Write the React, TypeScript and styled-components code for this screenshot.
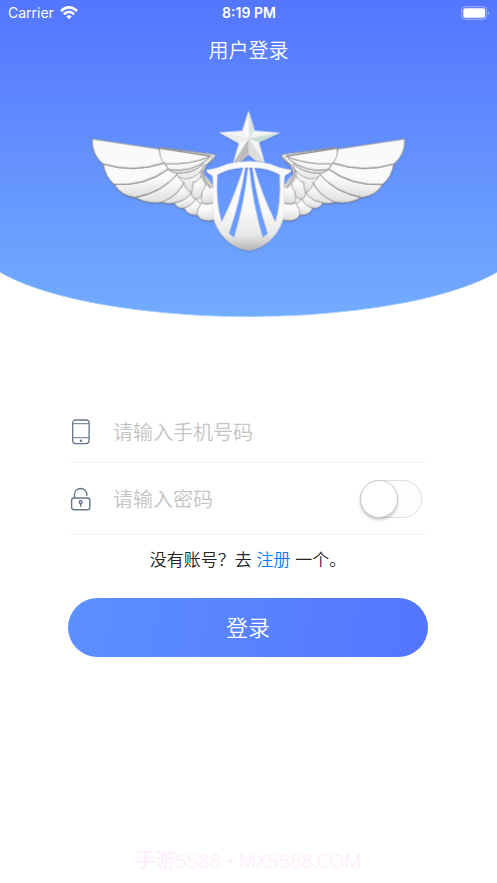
import React, { useState } from "react";
import styled, { createGlobalStyle } from "styled-components";

const GlobalStyle = createGlobalStyle`
  *, *::before, *::after { box-sizing: border-box; }
  body {
    margin: 0;
    background: #fff;
    font-family: "Noto Sans CJK SC", sans-serif;
    font-weight: 350;
  }
`;

const Page = styled.div`
  display: flex;
  flex-direction: column;
  min-height: 100vh;
  overflow: hidden;
`;

const Header = styled.header`
  position: relative;
  display: flex;
  flex-direction: column;
  padding-bottom: 62px;
  color: #fff;

  &::before {
    content: "";
    position: absolute;
    z-index: -1;
    inset: 0 -6%;
    border-bottom: 1px solid #a6cbff;
    border-radius: 0 0 50% 50% / 0 0 81px 81px;
    background: linear-gradient(#5476ff, #72acff);
  }
`;

const StatusBar = styled.div`
  display: grid;
  grid-template-columns: 1fr auto 1fr;
  align-items: center;
  height: 26px;
  padding: 0 7px 0 8px;
  font: 400 14px/26px Inter, sans-serif;
`;

const Carrier = styled.span`
  display: flex;
  align-items: center;
  gap: 6px;
`;

const Clock = styled.time`
  font-weight: 600;
`;

const Battery = styled.svg`
  justify-self: end;
`;

const Title = styled.h1`
  margin: 8px 0 0;
  font-size: 20px;
  font-weight: 350;
  line-height: 32px;
  text-align: center;
`;

const Emblem = styled.svg`
  align-self: center;
  margin-top: 39px;
`;

const Form = styled.form`
  display: flex;
  flex-direction: column;
  margin: 85px 69px 0 68px;
`;

const Field = styled.div<{ $tall?: boolean }>`
  display: flex;
  align-items: center;
  height: ${(p) => (p.$tall ? "72px" : "61px")};
  padding: 0 6px 0 2px;
  border-bottom: 1px solid #f3f3f3;
`;

const FieldLabel = styled.label`
  display: flex;
  width: 43px;
`;

const TextInput = styled.input`
  flex: 1;
  min-width: 0;
  padding: 0;
  border: 0;
  outline: 0;
  background: transparent;
  color: #333;
  font: 350 20px/30px "Noto Sans CJK SC", sans-serif;

  &::placeholder {
    color: #c4c4c4;
    opacity: 1;
  }
`;

const Toggle = styled.input`
  appearance: none;
  flex: none;
  display: flex;
  width: 62px;
  height: 38px;
  margin: 0;
  border: 1px solid #dedede;
  border-radius: 19px;
  background: #fdfdfd;
  cursor: pointer;

  &::before {
    content: "";
    width: 38px;
    height: 38px;
    margin: -1px;
    border: 1px solid #ccc;
    border-radius: 50%;
    background: #fff;
    box-shadow: 0 2px 3px rgba(0, 0, 0, 0.22);
  }

  &:checked {
    justify-content: flex-end;
    background: #5a83ff;
  }
`;

const Hint = styled.p`
  margin: 12px 0 0;
  color: #222;
  font-size: 17px;
  line-height: 24px;
  text-align: center;
`;

const Link = styled.a`
  margin: 0 1px;
  color: #007aff;
  text-decoration: none;
`;

const Submit = styled.button`
  height: 59px;
  margin-top: 27px;
  padding: 0 0 3px;
  border: 0;
  border-radius: 30px;
  background: linear-gradient(100deg, #5c90ff, #5475ff);
  color: #fff;
  font: 350 22px/32px "Noto Sans CJK SC", sans-serif;
  cursor: pointer;
`;

const Watermark = styled.footer`
  margin-top: auto;
  padding: 20px 0 7px;
  color: #ffeafc;
  font: 350 20px/30px "Noto Sans", "Noto Sans CJK SC", sans-serif;
  text-align: center;
`;

const FEATHERS = [
  "M22 102L222 132Q225 160 252 191L232 287Q196 300 152 277L88 238L55 177Q20 150 22 102Z",
  "M250 192L295 230L300 262L268 292Q248 299 232 287L152 277Q110 272 88 238Q60 215 55 177Q145 205 237 174Z",
  "M88 238Q170 245 250 192Q262 205 278 205Q232 270 152 277Q108 272 88 238Z",
  "M152 277Q232 262 278 206Q286 228 298 230Q276 274 232 291Q190 298 152 277Z",
  "M232 291Q284 270 298 230Q302 254 319 262Q306 288 268 293Q248 299 232 291Z",
  "M268 293Q304 288 319 262Q320 278 332 283Q320 304 298 309Q275 312 268 293Z",
  "M298 309Q322 302 331 282Q338 294 350 296L338 329Q308 334 298 309Z",
  "M350 293Q365 302 392 291V343Q350 355 337 330Q334 316 350 293Z",
  "M350 264Q348 246 360 232Q372 246 392 248V290Q355 304 349 285Z",
  "M323 232Q340 228 350 206Q351 222 363 233Q358 254 351 261Q352 276 338 282Q318 284 319 260Z",
  "M278 205Q320 210 350 180L350 208Q341 230 324 232Q325 252 319 262Q300 256 296 231Q280 224 278 205Z",
];

function Wing() {
  return (
    <g stroke="#858585" strokeWidth="2" strokeLinejoin="round">
      <path d="M250 192L350 200L392 248V320L340 320L300 262Z" fill="#f2f2f2" stroke="none" />
      {FEATHERS.map((d) => (
        <path key={d} d={d} fill="url(#feather)" />
      ))}
      <path d="M55 177Q145 205 237 174M88 238Q185 244 250 192M152 277Q232 262 278 206" fill="none" strokeWidth="3" />
      <path
        d="M225 127L378 147L392 150Q388 165 370 176Q345 200 365 225L385 240L376 250Q337 215 349 196Q330 220 300 222Q270 215 276 204Q249 200 242 177Q219 160 225 127Z"
        fill="url(#feather)"
      />
      <path d="M244 176Q310 181 378 154M250 194Q320 205 372 160M276 204Q323 207 357 175" fill="none" strokeWidth="3" />
      <path d="M228 130L378 153" fill="none" stroke="#777" strokeWidth="4" />
      <path d="M385 154Q375 175 356 183Q340 209 376 246" fill="none" strokeWidth="3" />
    </g>
  );
}

function WingedEmblem() {
  return (
    <Emblem width="327" height="150" viewBox="0 0 981 450" role="img" aria-label="飞翼徽章">
      <defs>
        <linearGradient id="feather" x1="0" y1="0" x2="0.15" y2="1">
          <stop offset="0.45" stopColor="#fafafa" />
          <stop offset="1" stopColor="#e0e0e1" />
        </linearGradient>
        <linearGradient id="shield" x1="0" y1="0" x2="0" y2="1">
          <stop offset="0.55" stopColor="#fafafa" />
          <stop offset="0.82" stopColor="#e8e8e8" />
          <stop offset="1" stopColor="#b4b4b4" />
        </linearGradient>
        <filter id="shade" x="-10%" y="-10%" width="120%" height="120%">
          <feDropShadow dx="0" dy="2" stdDeviation="2" floodColor="#3c5488" floodOpacity="0.6" />
        </filter>
      </defs>
      <g filter="url(#shade)">
        <Wing />
        <g transform="translate(981 0) scale(-1 1)">
          <Wing />
        </g>
      </g>
      <g transform="translate(344 0)" filter="url(#shade)">
        <path
          d="M20 195Q55 190 83 177Q147 160 212 177Q240 190 276 195Q272 205 256 211Q251 225 254 315C254 370 208 430 147 438C86 430 38 370 39 315Q43 225 37 211Q22 207 20 195ZM53 209Q48 295 66 351Q104 274 131 188Q88 190 53 209ZM137 188Q122 285 88 386L103 397Q133 300 145 188ZM149 188Q160 300 189 397L204 386Q171 285 158 188ZM164 188Q189 274 227 351Q245 295 240 209Q205 190 164 188Z"
          fill="url(#shield)"
          fillRule="evenodd"
        />
        <path d="M147 18L165 77L242 83L178 112L195 172Q180 168 168 167L147 149L127 167L101 172L118 115L58 82L128 77Z" fill="#f3f4f3" />
        <path d="M147 18L165 77L147 100Z" fill="#dde5e2" />
        <path d="M242 83L147 100L178 112Z" fill="#c9ded8" />
        <path d="M147 100L195 172Q180 168 168 167L147 149Z" fill="#dedede" />
        <path d="M147 100L147 149L127 167L101 172Z" fill="#bcbdbf" />
        <path d="M118 115L147 100L101 172Z" fill="#f8f8f8" />
        <path d="M58 82L147 100L118 115Z" fill="#ebecec" />
        <path d="M147 18L147 100L128 77Z" fill="#fafbfa" />
      </g>
    </Emblem>
  );
}

export default function App() {
  const [visible, setVisible] = useState(false);

  return (
    <Page>
      <GlobalStyle />
      <Header>
        <StatusBar>
          <Carrier>
            Carrier
            <svg width="18" height="14" viewBox="0 0 18 14" aria-hidden="true">
              <g fill="none" stroke="#fff" strokeWidth="2.6">
                <path d="M0.9 5.1Q9-2.2 17.1 5.1" />
                <path d="M3.8 8.2Q9 3.6 14.2 8.2" />
              </g>
              <path d="M6.2 10.3Q9 8 11.8 10.3L9 13.3Z" fill="#fff" />
            </svg>
          </Carrier>
          <Clock>8:19 PM</Clock>
          <Battery width="29" height="14" viewBox="0 0 29 14" aria-hidden="true">
            <rect x="0.7" y="0.7" width="25" height="12.6" rx="3.6" fill="none" stroke="#fff" strokeOpacity="0.45" />
            <rect x="2.3" y="2.3" width="21.8" height="9.4" rx="2" fill="#fff" />
            <path d="M27.2 4.8Q29 7 27.2 9.2Z" fill="#fff" fillOpacity="0.5" />
          </Battery>
        </StatusBar>
        <Title>用户登录</Title>
        <WingedEmblem />
      </Header>

      <Form onSubmit={(e) => e.preventDefault()}>
        <Field>
          <FieldLabel htmlFor="phone" aria-label="手机号码">
            <svg width="22" height="26" viewBox="0 0 22 26" fill="none" stroke="#65758b" aria-hidden="true">
              <rect x="2.7" y="1" width="16.4" height="23.6" rx="3" strokeWidth="1.3" />
              <path d="M3 4.7H19M3 18.7H19" />
              <circle cx="10.9" cy="21.7" r="1.2" fill="#65758b" stroke="none" />
            </svg>
          </FieldLabel>
          <TextInput id="phone" type="tel" placeholder="请输入手机号码" />
        </Field>
        <Field $tall>
          <FieldLabel htmlFor="password" aria-label="密码">
            <svg width="22" height="24" viewBox="0 0 22 24" fill="none" stroke="#65758b" strokeWidth="1.4" aria-hidden="true">
              <rect x="1.6" y="11" width="18.2" height="11.8" rx="2.4" />
              <path d="M4.5 11V8C4.5-.5 16.5-.9 17 8.2" strokeLinecap="round" />
              <circle cx="10.7" cy="15.2" r="1.4" />
              <path d="M10.7 16.5V19.7" />
            </svg>
          </FieldLabel>
          <TextInput id="password" type={visible ? "text" : "password"} placeholder="请输入密码" />
          <Toggle
            type="checkbox"
            role="switch"
            aria-label="显示密码"
            checked={visible}
            onChange={(e) => setVisible(e.target.checked)}
          />
        </Field>
        <Hint>
          没有账号？去 <Link href="#register">注册</Link> 一个。
        </Hint>
        <Submit type="submit">登录</Submit>
      </Form>

      <Watermark>手游5588 • MX5588.COM</Watermark>
    </Page>
  );
}
